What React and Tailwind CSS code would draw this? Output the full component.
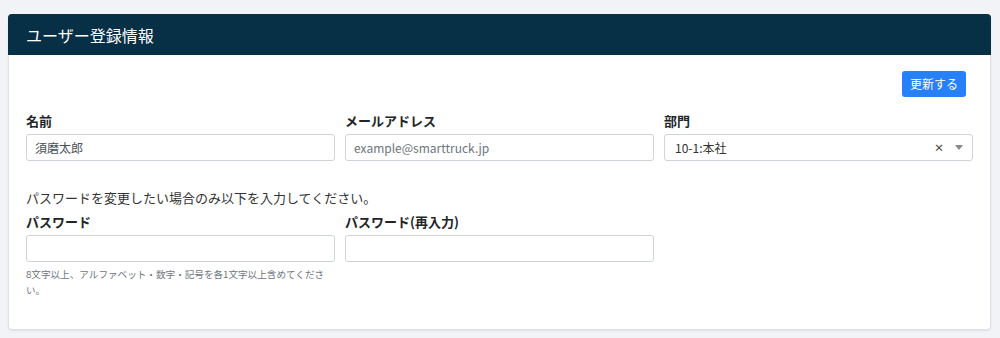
function Field({ label, children }) {
  return (
    <div>
      <label className="mb-[4px] block text-[13px] font-bold leading-[18px] text-[#212529]">
        {label}
      </label>
      {children}
    </div>
  );
}

function TextInput({ value = "", placeholder = "" }) {
  return (
    <input
      type="text"
      defaultValue={value}
      placeholder={placeholder}
      className="block h-[27px] w-full rounded-[3px] border border-[#ced4da] bg-white px-[8px] text-[12px] text-[#495057] outline-none placeholder:text-[#6c757d]"
    />
  );
}

export default function App() {
  return (
    <div
      className="h-[338px] w-[1000px] bg-[#f2f3f7] pl-[8px] pr-[9px] pt-[14px]"
      style={{ fontFamily: '"Noto Sans CJK JP", "Noto Sans", sans-serif' }}
    >
      <div className="h-[316px] rounded-[4px] border border-[#dfe1e6] bg-white shadow-[0_1px_2px_rgba(0,0,0,0.08)]">
        <div className="-m-px flex h-[41px] items-center rounded-t-[4px] bg-[#072f46] px-[18px] text-[16px] text-white">
          ユーザー登録情報
        </div>

        <div className="px-[17px] pt-[17px]">
          <div className="flex justify-end pr-[7px]">
            <button
              type="button"
              className="h-[26px] rounded-[3px] bg-[#2680f8] px-[8px] text-[12px] text-white"
            >
              更新する
            </button>
          </div>

          <div className="mt-[15px] grid grid-cols-3 gap-x-[10px]">
            <Field label="名前">
              <TextInput value="須磨太郎" />
            </Field>
            <Field label="メールアドレス">
              <TextInput placeholder="example@smarttruck.jp" />
            </Field>
            <Field label="部門">
              <div className="flex h-[27px] items-center rounded-[3px] border border-[#ced4da] bg-white pl-[10px] pr-[9px] text-[12px] text-[#333]">
                <span className="flex-1">10-1:本社</span>
                <span className="mr-[11px] text-[10px] font-bold text-[#444]">×</span>
                <span className="h-0 w-0 border-x-[4px] border-t-[5px] border-x-transparent border-t-[#888]" />
              </div>
            </Field>
          </div>

          <p className="mt-[28px] text-[13px] leading-[18px] text-[#333]">
            パスワードを変更したい場合のみ以下を入力してください。
          </p>

          <div className="mt-[6px] grid grid-cols-3 gap-x-[10px]">
            <Field label="パスワード">
              <TextInput />
              <p className="mt-[4px] text-[9.6px] leading-[16px] text-[#6c757d]">
                8文字以上、アルファベット・数字・記号を各1文字以上含めてください。
              </p>
            </Field>
            <Field label="パスワード(再入力)">
              <TextInput />
            </Field>
          </div>
        </div>
      </div>
    </div>
  );
}
